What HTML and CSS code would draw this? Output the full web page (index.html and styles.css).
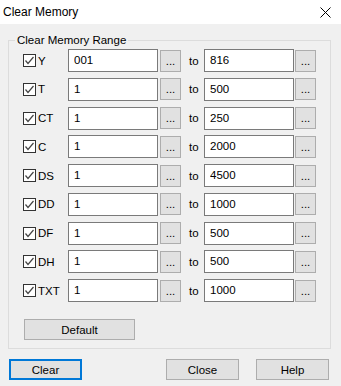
FILE: index.html
```html
<!DOCTYPE html>
<html lang="en">
<head>
  <meta charset="UTF-8" />
  <title>Clear Memory</title>
  <link rel="stylesheet" href="styles.css">
</head>
<body>
  <div class="titlebar">
    <span class="title">Clear Memory</span>
    <svg class="close-x" width="11" height="11" viewBox="0 0 11 11">
      <path d="M0.5 0.5 L10.5 10.5 M10.5 0.5 L0.5 10.5" stroke="#000" stroke-width="1" fill="none"/>
    </svg>
  </div>

  <div class="content">
    <fieldset class="range">
      <legend>Clear Memory Range</legend>
      <div class="rows">
        <div class="row">
          <label class="check"><span class="box"><svg width="11" height="11" viewBox="0 0 11 11"><path d="M1.5 5.5 L4 8.5 L9.5 2" stroke="#444" stroke-width="1.2" fill="none"/></svg></span>Y</label>
          <input class="field" value="001"><button class="dots">...</button>
          <span class="to">to</span>
          <input class="field" value="816"><button class="dots">...</button>
        </div>
        <div class="row">
          <label class="check"><span class="box"><svg width="11" height="11" viewBox="0 0 11 11"><path d="M1.5 5.5 L4 8.5 L9.5 2" stroke="#444" stroke-width="1.2" fill="none"/></svg></span>T</label>
          <input class="field" value="1"><button class="dots">...</button>
          <span class="to">to</span>
          <input class="field" value="500"><button class="dots">...</button>
        </div>
        <div class="row">
          <label class="check"><span class="box"><svg width="11" height="11" viewBox="0 0 11 11"><path d="M1.5 5.5 L4 8.5 L9.5 2" stroke="#444" stroke-width="1.2" fill="none"/></svg></span>CT</label>
          <input class="field" value="1"><button class="dots">...</button>
          <span class="to">to</span>
          <input class="field" value="250"><button class="dots">...</button>
        </div>
        <div class="row">
          <label class="check"><span class="box"><svg width="11" height="11" viewBox="0 0 11 11"><path d="M1.5 5.5 L4 8.5 L9.5 2" stroke="#444" stroke-width="1.2" fill="none"/></svg></span>C</label>
          <input class="field" value="1"><button class="dots">...</button>
          <span class="to">to</span>
          <input class="field" value="2000"><button class="dots">...</button>
        </div>
        <div class="row">
          <label class="check"><span class="box"><svg width="11" height="11" viewBox="0 0 11 11"><path d="M1.5 5.5 L4 8.5 L9.5 2" stroke="#444" stroke-width="1.2" fill="none"/></svg></span>DS</label>
          <input class="field" value="1"><button class="dots">...</button>
          <span class="to">to</span>
          <input class="field" value="4500"><button class="dots">...</button>
        </div>
        <div class="row">
          <label class="check"><span class="box"><svg width="11" height="11" viewBox="0 0 11 11"><path d="M1.5 5.5 L4 8.5 L9.5 2" stroke="#444" stroke-width="1.2" fill="none"/></svg></span>DD</label>
          <input class="field" value="1"><button class="dots">...</button>
          <span class="to">to</span>
          <input class="field" value="1000"><button class="dots">...</button>
        </div>
        <div class="row">
          <label class="check"><span class="box"><svg width="11" height="11" viewBox="0 0 11 11"><path d="M1.5 5.5 L4 8.5 L9.5 2" stroke="#444" stroke-width="1.2" fill="none"/></svg></span>DF</label>
          <input class="field" value="1"><button class="dots">...</button>
          <span class="to">to</span>
          <input class="field" value="500"><button class="dots">...</button>
        </div>
        <div class="row">
          <label class="check"><span class="box"><svg width="11" height="11" viewBox="0 0 11 11"><path d="M1.5 5.5 L4 8.5 L9.5 2" stroke="#444" stroke-width="1.2" fill="none"/></svg></span>DH</label>
          <input class="field" value="1"><button class="dots">...</button>
          <span class="to">to</span>
          <input class="field" value="500"><button class="dots">...</button>
        </div>
        <div class="row">
          <label class="check"><span class="box"><svg width="11" height="11" viewBox="0 0 11 11"><path d="M1.5 5.5 L4 8.5 L9.5 2" stroke="#444" stroke-width="1.2" fill="none"/></svg></span>TXT</label>
          <input class="field" value="1"><button class="dots">...</button>
          <span class="to">to</span>
          <input class="field" value="1000"><button class="dots">...</button>
        </div>
      </div>
      <button class="btn default">Default</button>
    </fieldset>

    <div class="actions">
      <button class="btn primary">Clear</button>
      <button class="btn close-btn">Close</button>
      <button class="btn help">Help</button>
    </div>
  </div>
</body>
</html>
```

FILE: styles.css
```css
body {
  margin: 0;
  background: #f0f0f0;
  font-family: "Liberation Sans", Arial, sans-serif;
  font-size: 11.5px;
  color: #000;
}

.titlebar {
  height: 24px;
  background: #fff;
  display: flex;
  align-items: center;
  justify-content: space-between;
  padding: 0 10px 0 3px;
}

.title {
  font-size: 12px;
}

.close-x {
  display: block;
}

.content {
  padding: 9px 10px 0 8px;
}

.range {
  margin: 0;
  padding: 0 0 8px 0;
  border: 1px solid #dcdcdc;
}

.range legend {
  margin-left: 6px;
  padding: 0 2px;
  line-height: 14px;
}

.rows {
  display: flex;
  flex-direction: column;
  gap: 5.75px;
  padding: 2px 0 0 14px;
}

.row {
  display: flex;
  align-items: center;
  height: 23px;
}

.check {
  width: 45px;
  display: flex;
  align-items: center;
  gap: 2px;
}

.box {
  width: 13px;
  height: 13px;
  box-sizing: border-box;
  border: 1px solid #333;
  background: #fff;
  display: flex;
}

.box svg {
  display: block;
}

.field {
  width: 90px;
  height: 23px;
  box-sizing: border-box;
  margin: 0;
  padding: 0 0 1px 5px;
  border: 1px solid #7a7a7a;
  background: #fff;
  font: inherit;
  color: #000;
  outline: none;
}

.dots {
  width: 21px;
  height: 22px;
  margin-left: 2px;
  padding: 0 0 0 0;
  border: 1px solid #adadad;
  background: #e1e1e1;
  font: inherit;
  color: #000;
}

.row .dots:last-child {
  margin-left: 1px;
}

.to {
  width: 23px;
  padding-left: 8px;
  box-sizing: border-box;
}

.btn {
  width: 73px;
  height: 21px;
  padding: 0;
  border: 1px solid #adadad;
  background: #e1e1e1;
  font: inherit;
  color: #000;
}

.btn.default {
  display: block;
  width: 111px;
  margin: 17px 0 0 15px;
}

.btn.primary {
  border: 2px solid #0078d7;
}

.actions {
  display: flex;
  margin-top: 10px;
  padding: 0 2px 0 1px;
}

.close-btn {
  margin-left: auto;
}

.help {
  margin-left: 17px;
}
```
